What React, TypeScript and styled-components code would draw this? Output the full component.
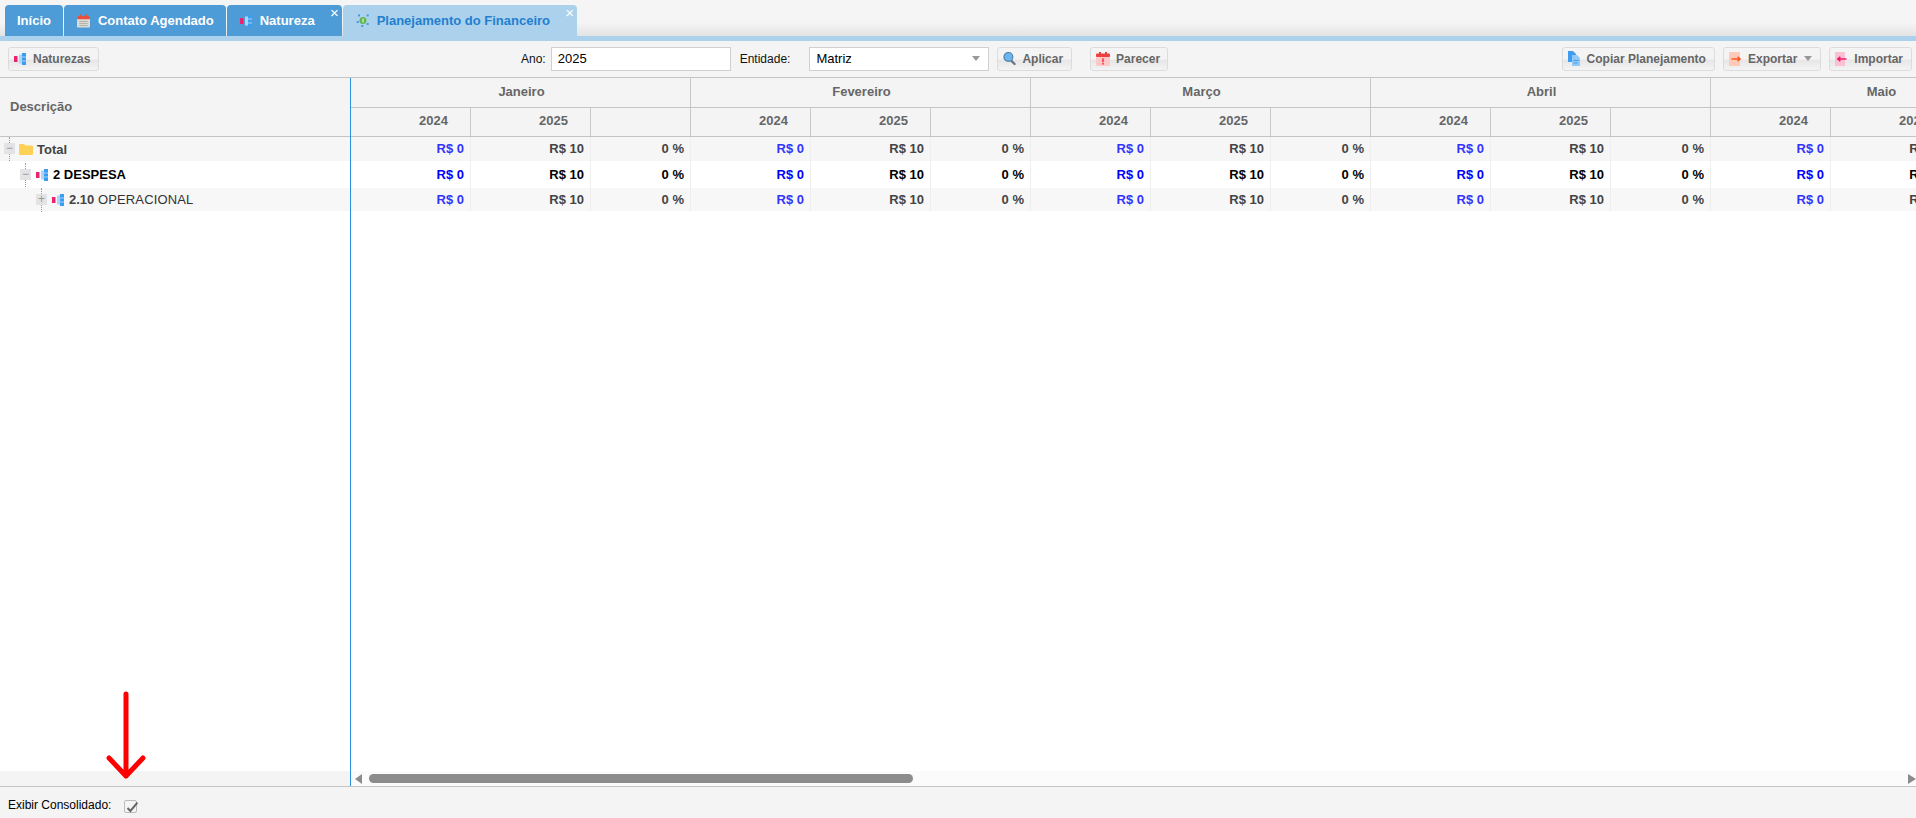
import React from "react";
import styled, { createGlobalStyle } from "styled-components";

const MONTHS = ["Janeiro", "Fevereiro", "Março", "Abril", "Maio"];

const ROWS = [
  { level: 0, kind: "total", open: true },
  { level: 1, kind: "strong", open: true },
  { level: 2, kind: "plain", open: false },
];

function NatureIcon() {
  return (
    <svg width="12" height="12" viewBox="0 0 12 12">
      <rect x="0" y="3" width="3.5" height="6" fill="#e8246e" />
      <rect x="5" y="1.5" width="3" height="9" fill="#a9d6f9" />
      <rect x="8" y="0" width="4" height="12" fill="#3a9df2" />
      <rect x="8" y="3.6" width="4" height="0.8" fill="#bfe0fb" />
      <rect x="8" y="7.6" width="4" height="0.8" fill="#bfe0fb" />
    </svg>
  );
}

function CalendarIcon() {
  return (
    <svg width="13" height="14" viewBox="0 0 14 14">
      <rect x="0" y="1.5" width="14" height="12.5" rx="1" fill="#dcdad4" />
      <rect x="0" y="1.5" width="14" height="3.5" rx="1" fill="#e8503f" />
      <rect x="3" y="0" width="2" height="3" fill="#e8503f" />
      <rect x="9" y="0" width="2" height="3" fill="#e8503f" />
      <rect x="2.5" y="7" width="9" height="1" fill="#b3afa6" />
      <rect x="2.5" y="9.2" width="9" height="1" fill="#b3afa6" />
      <rect x="2.5" y="11.4" width="9" height="1" fill="#b3afa6" />
    </svg>
  );
}

function PlanningIcon() {
  return (
    <svg width="13" height="13" viewBox="0 0 13 13">
      <circle cx="7" cy="6.5" r="3.5" fill="#62b84e" />
      <rect x="6.4" y="4.6" width="1.3" height="3.8" fill="#d8f0c8" />
      <g fill="#3f9ae6">
        <rect x="2" y="0.4" width="2" height="2" />
        <rect x="10.7" y="0.4" width="2" height="2" />
        <rect x="0.7" y="7" width="2" height="2" />
        <rect x="5.3" y="11" width="2" height="2" />
        <rect x="10.7" y="9" width="2" height="2" />
      </g>
    </svg>
  );
}

function SearchIcon() {
  return (
    <svg width="13" height="15" viewBox="0 0 14 15">
      <path d="M8.5 9.5 L12.5 13.5" stroke="#6b7480" strokeWidth="2.4" strokeLinecap="round" />
      <circle cx="5.8" cy="5.8" r="4.8" fill="#6db5ee" stroke="#4c7fa8" strokeWidth="1.2" />
    </svg>
  );
}

function ReviewIcon() {
  return (
    <svg width="14" height="14" viewBox="0 0 14 14">
      <rect x="0" y="2" width="14" height="12" rx="1" fill="#ffc9c9" />
      <rect x="0" y="1.5" width="14" height="3.5" rx="1" fill="#ee4040" />
      <rect x="3" y="0" width="2" height="3" fill="#ee4040" />
      <rect x="9" y="0" width="2" height="3" fill="#ee4040" />
      <rect x="6.2" y="6.3" width="1.6" height="4" fill="#ee4040" />
      <rect x="6.2" y="11" width="1.6" height="1.6" fill="#ee4040" />
    </svg>
  );
}

function CopyIcon() {
  return (
    <svg width="12" height="15" viewBox="0 0 12 15">
      <path d="M0 0 H5 L8 3 V11 H0 Z" fill="#3f9cf0" />
      <path d="M4 4 H9 L12 7 V15 H4 Z" fill="#90c8f6" />
      <rect x="5.5" y="9" width="5" height="1" fill="#3f9cf0" />
      <rect x="5.5" y="11.5" width="4" height="1" fill="#3f9cf0" />
    </svg>
  );
}

function ExportIcon() {
  return (
    <svg width="12" height="14" viewBox="0 0 12 14">
      <rect x="0" y="0" width="11" height="14" fill="#ffcbb8" />
      <path d="M2.5 7 H11 M8.6 4.8 L11.2 7 L8.6 9.2" stroke="#fb5a22" strokeWidth="1.6" fill="none" />
    </svg>
  );
}

function ImportIcon() {
  return (
    <svg width="12" height="14" viewBox="0 0 12 14">
      <rect x="0" y="0" width="10" height="14" fill="#fbc0d4" />
      <path d="M11.5 7 H3 M5.4 4.8 L2.8 7 L5.4 9.2" stroke="#ec1c68" strokeWidth="1.6" fill="none" />
    </svg>
  );
}

function FolderIcon() {
  return (
    <svg width="14" height="11" viewBox="0 0 14 11">
      <path d="M0 1 Q0 0 1 0 H5 L6.5 1.5 H13 Q14 1.5 14 2.5 V10 Q14 11 13 11 H1 Q0 11 0 10 Z" fill="#fdd155" />
    </svg>
  );
}

function CheckIcon() {
  return (
    <svg width="15" height="15" viewBox="0 0 15 15">
      <path d="M3.5 8 L6.4 11 L13.4 2.6" stroke="#666" strokeWidth="2" fill="none" />
    </svg>
  );
}

export default function App() {
  return (
    <Page>
      <GlobalStyle />
      <TabBar>
        <FirstTab>
          <TabLabel>Início</TabLabel>
        </FirstTab>
        <Tab>
          <CalendarIcon />
          <TabLabel>Contato Agendado</TabLabel>
        </Tab>
        <Tab $closable>
          <NatureIcon />
          <TabLabel>Natureza</TabLabel>
          <TabClose>×</TabClose>
        </Tab>
        <Tab $active $closable>
          <PlanningIcon />
          <TabLabel>Planejamento do Financeiro</TabLabel>
          <TabClose>×</TabClose>
        </Tab>
      </TabBar>
      <Strip />
      <Toolbar>
        <ToolGroup>
          <Button>
            <NatureIcon />
            Naturezas
          </Button>
        </ToolGroup>
        <ToolGroup>
          <FieldLabel>Ano:</FieldLabel>
          <YearInput readOnly value="2025" />
          <EntityLabel>Entidade:</EntityLabel>
          <Select>
            Matriz
            <Caret />
          </Select>
          <ApplyButton>
            <SearchIcon />
            Aplicar
          </ApplyButton>
          <ReviewButton>
            <ReviewIcon />
            Parecer
          </ReviewButton>
        </ToolGroup>
        <RightGroup>
          <Button>
            <CopyIcon />
            Copiar Planejamento
          </Button>
          <Button>
            <ExportIcon />
            Exportar
            <Caret />
          </Button>
          <Button>
            <ImportIcon />
            Importar
          </Button>
        </RightGroup>
      </Toolbar>
      <Grid>
        <LeftPane>
          <DescriptionHead>Descrição</DescriptionHead>
          <TreeRow $kind="total" $level={0}>
            <Expander $open />
            <FolderIcon />
            <TreeLabel>Total</TreeLabel>
          </TreeRow>
          <TreeRow $kind="strong" $level={1}>
            <Expander $open />
            <NatureIcon />
            <TreeLabel>2 DESPESA</TreeLabel>
          </TreeRow>
          <TreeRow $kind="plain" $level={2}>
            <Expander />
            <NatureIcon />
            <TreeLabel>
              2.10 <Light>OPERACIONAL</Light>
            </TreeLabel>
          </TreeRow>
          <Filler />
          <LeftCorner />
        </LeftPane>
        <RightPane>
          <Months>
            {MONTHS.map((m) => (
              <MonthHead key={m}>
                <MonthName>{m}</MonthName>
                <Years>
                  <YearCell>2024</YearCell>
                  <YearCell>2025</YearCell>
                  <YearCell />
                </Years>
              </MonthHead>
            ))}
          </Months>
          {ROWS.map((r) => (
            <DataRow key={r.level} $kind={r.kind}>
              {MONTHS.map((m) => (
                <React.Fragment key={m}>
                  <ValueCell $blue>R$ 0</ValueCell>
                  <ValueCell>R$ 10</ValueCell>
                  <ValueCell>0 %</ValueCell>
                </React.Fragment>
              ))}
            </DataRow>
          ))}
          <Filler />
          <ScrollBar>
            <ArrowLeft />
            <Thumb />
            <ArrowRight />
          </ScrollBar>
        </RightPane>
      </Grid>
      <Footer>
        <FooterLabel>Exibir Consolidado:</FooterLabel>
        <CheckBox>
          <CheckIcon />
        </CheckBox>
      </Footer>
      <RedArrow width="44" height="92" viewBox="0 0 44 92">
        <path d="M22 4 V86 M5 68 L22 86 L39 68" stroke="#ff0000" strokeWidth="5" strokeLinecap="round" strokeLinejoin="round" fill="none" />
      </RedArrow>
    </Page>
  );
}

const GlobalStyle = createGlobalStyle`
html, body {
  margin: 0;
  padding: 0;
  background: #fff;
  overflow: hidden;
}
body {
  font-family: "Liberation Sans", Arial, sans-serif;
  font-size: 12px;
}
`;

const Page = styled.div`
position: relative;
display: flex;
flex-direction: column;
width: 1916px;
height: 818px;
overflow: hidden;
`;

const TabBar = styled.div`
display: flex;
align-items: flex-end;
gap: 1px;
height: 36px;
padding-left: 5px;
box-sizing: border-box;
background: linear-gradient(#f5f5f5 0, #f5f5f5 62%, #e3e3e3 100%);
`;

const Tab = styled.div<{ $active?: boolean; $closable?: boolean }>`
position: relative;
display: flex;
align-items: center;
gap: 8px;
height: 31px;
padding: 0 ${(p) => (p.$closable ? "27px" : "12px")} 0 13px;
box-sizing: border-box;
border-radius: 4px 4px 0 0;
background: ${(p) => (p.$active ? "#abd1ec" : "#4d9cd8")};
color: ${(p) => (p.$active ? "#1f80d0" : "#fff")};
font-size: 13px;
font-weight: bold;
white-space: nowrap;
`;

const FirstTab = styled(Tab)`
padding: 0 12px;
`;

const TabLabel = styled.span``;

const TabClose = styled.span`
position: absolute;
top: 0;
right: 3px;
color: #fff;
font-size: 15px;
font-weight: normal;
line-height: 15px;
`;

const Strip = styled.div`
height: 5px;
background: #abd1ec;
`;

const Toolbar = styled.div`
display: grid;
grid-template-columns: 513px auto 1fr;
align-items: center;
height: 37px;
padding: 0 4px 1px 8px;
box-sizing: border-box;
background: #f4f4f4;
border-bottom: 1px solid #c4c4c4;
`;

const ToolGroup = styled.div`
display: flex;
align-items: center;
`;

const RightGroup = styled(ToolGroup)`
justify-content: flex-end;
gap: 8px;
`;

const Button = styled.div`
display: flex;
align-items: center;
gap: 7px;
height: 24px;
padding: 0 8px 0 5px;
box-sizing: border-box;
border: 1px solid #dcdcdc;
border-radius: 3px;
background: linear-gradient(#f4f4f4 0, #f4f4f4 50%, #e6e6e6 55%, #f4f4f4 100%);
color: #666;
font-weight: bold;
white-space: nowrap;
`;

const ApplyButton = styled(Button)`
gap: 6px;
margin-left: 8px;
`;

const ReviewButton = styled(Button)`
gap: 6px;
margin-left: 18px;
padding-right: 7px;
`;

const FieldLabel = styled.span`
margin-right: 5px;
color: #111;
`;

const EntityLabel = styled(FieldLabel)`
margin-left: 9px;
margin-right: 19px;
`;

const YearInput = styled.input`
width: 180px;
height: 24px;
padding: 0 6px;
box-sizing: border-box;
border: 1px solid #d0d0d0;
outline: none;
background: #fff;
color: #000;
font-family: inherit;
font-size: 13px;
`;

const Select = styled.div`
display: flex;
align-items: center;
justify-content: space-between;
width: 180px;
height: 24px;
padding: 0 8px 0 6px;
box-sizing: border-box;
border: 1px solid #d0d0d0;
background: #fff;
color: #000;
font-size: 13px;
`;

const Caret = styled.span`
width: 0;
height: 0;
border-style: solid;
border-width: 5px 4px 0 4px;
border-color: #999 transparent transparent transparent;
`;

const Grid = styled.div`
flex: 1;
display: flex;
min-height: 0;
`;

const LeftPane = styled.div`
display: flex;
flex-direction: column;
flex: none;
width: 351px;
box-sizing: border-box;
border-right: 1px solid #2f8fe0;
`;

const RightPane = styled.div`
display: flex;
flex-direction: column;
flex: 1;
min-width: 0;
overflow: hidden;
`;

const DescriptionHead = styled.div`
display: flex;
align-items: center;
flex: none;
height: 59px;
padding: 0 0 2px 10px;
box-sizing: border-box;
background: #f4f4f4;
border-bottom: 1px solid #c4c4c4;
color: #666;
font-size: 13px;
font-weight: bold;
`;

const rowColor: Record<string, string> = {
  total: "#444",
  strong: "#000",
  plain: "#444",
};

const rowBg: Record<string, string> = {
  total: "#f6f6f6",
  strong: "#fff",
  plain: "#f7f7f7",
};

const rowHeight: Record<string, string> = {
  total: "24px",
  strong: "27px",
  plain: "23px",
};

const TreeRow = styled.div<{ $kind: string; $level: number }>`
display: flex;
align-items: center;
gap: ${(p) => (p.$level === 0 ? "4px" : "5px")};
flex: none;
height: ${(p) => rowHeight[p.$kind]};
padding-left: ${(p) => 4 + p.$level * 16}px;
box-sizing: border-box;
background: ${(p) => rowBg[p.$kind]};
color: ${(p) => rowColor[p.$kind]};
font-size: 13px;
font-weight: bold;
`;

const TreeLabel = styled.span``;

const Light = styled.span`
color: #333;
font-weight: normal;
letter-spacing: 0.15px;
`;

const Expander = styled.span<{ $open?: boolean }>`
position: relative;
flex: none;
width: 11px;
height: 10px;
background: #e3e3e5;
&::before {
  content: "";
  position: absolute;
  left: 5px;
  top: -7px;
  height: 24px;
  border-left: 1px dotted #999;
}
&::after {
  content: "${(p) => (p.$open ? "−" : "+")}";
  position: absolute;
  left: 0;
  right: 0;
  top: -1px;
  text-align: center;
  color: #999;
  font-size: 12px;
  font-weight: normal;
  line-height: 11px;
  background: #e3e3e5;
}
`;

const Filler = styled.div`
flex: 1;
background: #fff;
`;

const LeftCorner = styled.div`
flex: none;
height: 15px;
background: #f4f4f4;
`;

const Months = styled.div`
display: flex;
flex: none;
width: 1700px;
`;

const MonthHead = styled.div`
flex: none;
width: 340px;
box-sizing: border-box;
background: #f4f4f4;
`;

const MonthName = styled.div`
height: 30px;
padding-left: 2px;
box-sizing: border-box;
border-right: 1px solid #c8c8c8;
border-bottom: 1px solid #c4c4c4;
color: #666;
font-size: 13px;
font-weight: bold;
line-height: 28px;
text-align: center;
`;

const Years = styled.div`
display: grid;
grid-template-columns: 120px 120px 100px;
height: 29px;
border-bottom: 1px solid #c4c4c4;
box-sizing: border-box;
`;

const YearCell = styled.div`
padding-right: 22px;
border-right: 1px solid #c8c8c8;
color: #666;
font-size: 13px;
font-weight: bold;
line-height: 26px;
text-align: right;
`;

const DataRow = styled.div<{ $kind: string }>`
display: grid;
flex: none;
grid-template-columns: repeat(5, 120px 120px 100px);
width: 1700px;
height: ${(p) => rowHeight[p.$kind]};
background: ${(p) => rowBg[p.$kind]};
color: ${(p) => rowColor[p.$kind]};
line-height: ${(p) => rowHeight[p.$kind]};
--blue: ${(p) => (p.$kind === "strong" ? "#0000ff" : "#3333ff")};
`;

const ValueCell = styled.div<{ $blue?: boolean }>`
padding-right: 6px;
border-right: 1px solid #eee;
color: ${(p) => (p.$blue ? "var(--blue)" : "inherit")};
font-size: 13px;
font-weight: bold;
text-align: right;
`;

const ScrollBar = styled.div`
display: flex;
align-items: center;
flex: none;
height: 15px;
background: #fbfbfb;
`;

const ArrowLeft = styled.span`
flex: none;
width: 0;
height: 0;
margin-left: 4px;
border-style: solid;
border-width: 5px 7px 5px 0;
border-color: transparent #8c8c8c transparent transparent;
`;

const Thumb = styled.div`
flex: none;
width: 544px;
height: 9px;
margin-left: 7px;
border-radius: 5px;
background: #8c8c8c;
`;

const ArrowRight = styled.span`
flex: none;
width: 0;
height: 0;
margin-left: auto;
border-style: solid;
border-width: 5px 0 5px 8px;
border-color: transparent transparent transparent #8c8c8c;
`;

const Footer = styled.div`
display: flex;
align-items: center;
gap: 13px;
flex: none;
height: 32px;
padding: 5px 0 0 8px;
box-sizing: border-box;
background: #f4f4f4;
border-top: 1px solid #c4c4c4;
`;

const FooterLabel = styled.span`
color: #000;
`;

const CheckBox = styled.span`
display: block;
width: 13px;
height: 13px;
margin-top: 3px;
box-sizing: border-box;
border: 1px solid #bbb;
border-radius: 2px;
background: #f4f4f4;
svg {
  display: block;
  margin: -1px;
}
`;

const RedArrow = styled.svg`
position: absolute;
left: 104px;
top: 690px;
`;
